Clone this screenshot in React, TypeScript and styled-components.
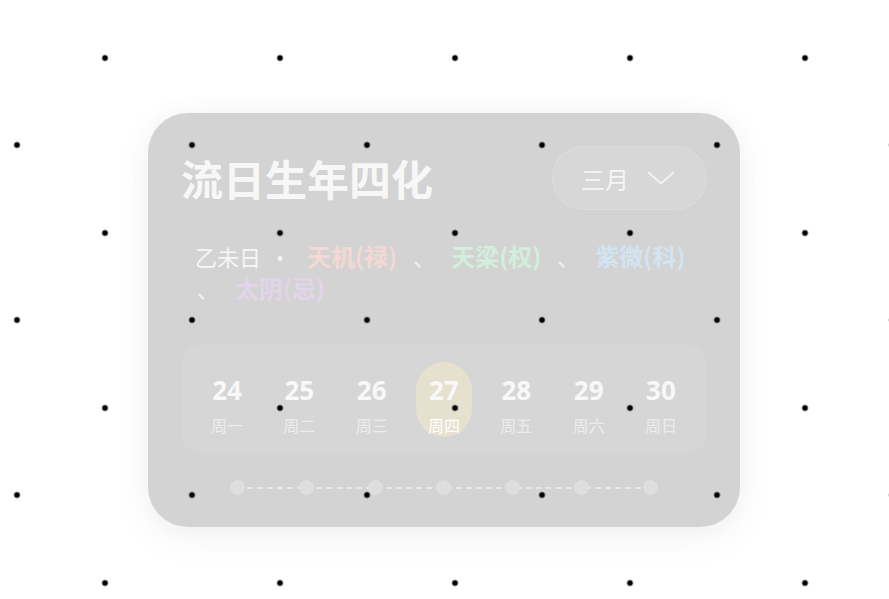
import styled, { createGlobalStyle } from 'styled-components';

const GlobalStyle = createGlobalStyle`
  html, body {
    margin: 0;
    padding: 0;
    background: #ffffff;
  }
  body {
    font-family: "Noto Sans", "Noto Sans CJK SC", sans-serif;
  }
`;

const Page = styled.div`
  min-height: 100vh;
  display: flex;
  justify-content: center;
  align-items: flex-start;
  padding: 113px 1px 0 0;
  box-sizing: border-box;
`;

const DotOverlay = styled.div`
  position: fixed;
  inset: 0;
  pointer-events: none;
  z-index: 10;
  background-image:
    radial-gradient(circle at center, #000 2.6px, transparent 3.3px),
    radial-gradient(circle at center, #000 2.6px, transparent 3.3px);
  background-size: 175px 175px, 175px 175px;
  background-position: 17.5px -29.5px, -70.5px 57.5px;
`;

const Card = styled.div`
  width: 592px;
  height: 414px;
  box-sizing: border-box;
  padding: 33px 33px 0 33px;
  border-radius: 40px;
  background: #d3d3d3;
  box-shadow: 0 10px 40px rgba(0, 0, 0, 0.05), 0 0 24px rgba(0, 0, 0, 0.03);
  display: flex;
  flex-direction: column;
`;

const Header = styled.div`
  display: flex;
  align-items: center;
  justify-content: space-between;
  height: 64px;
`;

const Title = styled.h1`
  margin: 0;
  font-family: "Noto Sans CJK SC", sans-serif;
  font-size: 42px;
  font-weight: 700;
  color: #f7f7f7;
  line-height: 1;
`;

const MonthButton = styled.button`
  display: flex;
  align-items: center;
  gap: 18px;
  height: 64px;
  box-sizing: border-box;
  padding: 0 31px 0 28px;
  border-radius: 32px;
  border: 1px solid rgba(255, 255, 255, 0.12);
  background: rgba(255, 255, 255, 0.1);
  color: #f5f5f5;
  font-family: "Noto Sans CJK SC", sans-serif;
  font-size: 24px;
  cursor: pointer;
`;

const Transforms = styled.p`
  margin: 30px 0 0 0;
  padding: 0 0 0 14px;
  font-family: "Noto Sans CJK SC", sans-serif;
  font-size: 22px;
  line-height: 32px;
  color: #f6f6f6;
`;

const Bullet = styled.span`
  margin: 0 2px 0 8px;
`;

const Sep = styled.span`
  display: inline-block;
  color: #f3f3f3;
  margin: 0 2px;
`;

const Star = styled.span<{ $tone: string }>`
  display: inline-block;
  white-space: nowrap;
  font-size: 24px;
  font-weight: 700;
  color: ${(p) => p.$tone};
  margin: 0 14px;
`;

const Strip = styled.div`
  margin-top: 41px;
  height: 108px;
  box-sizing: border-box;
  padding: 17px 18px 0 18px;
  border-radius: 20px;
  background: rgba(255, 255, 255, 0.08);
  display: flex;
  justify-content: space-between;
  align-items: flex-start;
`;

const Day = styled.div<{ $active?: boolean }>`
  width: 56px;
  height: 75px;
  box-sizing: border-box;
  padding-top: 12px;
  border-radius: 28px;
  background: ${(p) => (p.$active ? '#e6e0cf' : 'transparent')};
  display: flex;
  flex-direction: column;
  align-items: center;
`;

const DayNum = styled.div`
  font-family: "Noto Sans", sans-serif;
  font-size: 26px;
  font-weight: 700;
  line-height: 32px;
  color: #f8f8f8;
`;

const DayName = styled.div<{ $active?: boolean }>`
  margin-top: 8px;
  font-family: "Noto Sans CJK SC", sans-serif;
  font-size: 16px;
  line-height: 22px;
  color: ${(p) => (p.$active ? '#ffffff' : '#ececec')};
`;

const Timeline = styled.div`
  position: relative;
  width: 428px;
  margin: 27px auto 0 auto;
  height: 15px;
  display: flex;
  justify-content: space-between;
  align-items: center;
`;

const DashLine = styled.div`
  position: absolute;
  left: 7px;
  right: 7px;
  top: 7px;
  height: 0;
  border-top: 2px dashed rgba(255, 255, 255, 0.45);
`;

const Node = styled.span`
  position: relative;
  width: 15px;
  height: 15px;
  border-radius: 50%;
  background: #dedede;
`;

const days = [
  { n: 24, d: '周一' },
  { n: 25, d: '周二' },
  { n: 26, d: '周三' },
  { n: 27, d: '周四', active: true },
  { n: 28, d: '周五' },
  { n: 29, d: '周六' },
  { n: 30, d: '周日' },
];

function Chevron() {
  return (
    <svg width="28" height="14" viewBox="0 0 28 14" fill="none">
      <path d="M1.5 1.5 L14 12.5 L26.5 1.5" stroke="#f3f3f3" strokeWidth="1.8" strokeLinecap="round" strokeLinejoin="round" />
    </svg>
  );
}

export default function App() {
  return (
    <>
      <GlobalStyle />
      <Page>
        <Card>
          <Header>
            <Title>流日生年四化</Title>
            <MonthButton>
              三月
              <Chevron />
            </MonthButton>
          </Header>
          <Transforms>
            乙未日<Bullet>•</Bullet>
            <Star $tone="#f3d8d4">天机(禄)</Star>
            <Sep>、</Sep>
            <Star $tone="#d3eedb">天梁(权)</Star>
            <Sep>、</Sep>
            <Star $tone="#d2e4f1">紫微(科)</Star>
            <Sep>、</Sep>
            <Star $tone="#e2d5e9">太阴(忌)</Star>
          </Transforms>
          <Strip>
            {days.map((day) => (
              <Day key={day.n} $active={day.active}>
                <DayNum>{day.n}</DayNum>
                <DayName $active={day.active}>{day.d}</DayName>
              </Day>
            ))}
          </Strip>
          <Timeline>
            <DashLine />
            {days.map((day) => (
              <Node key={day.n} />
            ))}
          </Timeline>
        </Card>
      </Page>
      <DotOverlay />
    </>
  );
}
